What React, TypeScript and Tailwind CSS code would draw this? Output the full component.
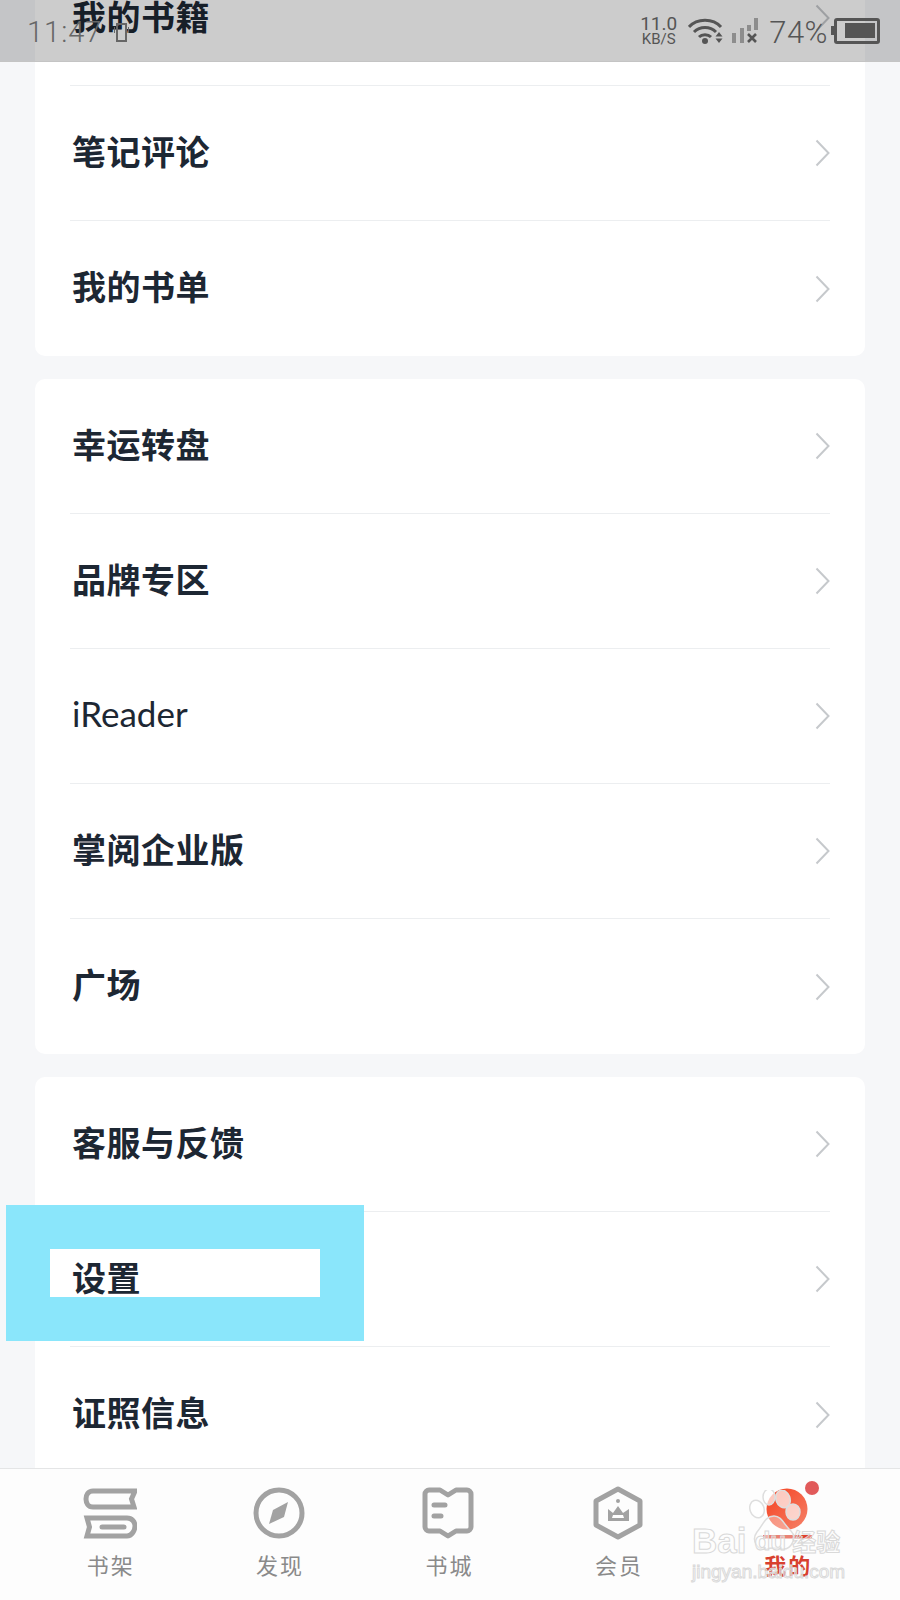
const cardOne = ["我的书籍", "笔记评论", "我的书单"];
const cardTwo = ["幸运转盘", "品牌专区", "iReader", "掌阅企业版", "广场"];
const cardThree = ["客服与反馈", "设置", "证照信息"];

function Chevron() {
  return (
    <svg width="15" height="28" viewBox="0 0 15 28" fill="none" className="shrink-0">
      <path d="M1.5 1.5l12 12.5-12 12.5" stroke="#c6c9cc" strokeWidth="2" />
    </svg>
  );
}

function Row({ label, last }: { label: string; last?: boolean }) {
  return (
    <div className={"flex h-[135px] items-center justify-between " + (last ? "" : "border-b border-[#eceef0]")}>
      <span
        className={
          label === "iReader"
            ? "pb-[6px] pl-[2px] font-['Lato',sans-serif] text-[35px] text-[#1d2733]"
            : "pb-[6px] pl-[2px] font-['Noto_Sans_CJK_SC',sans-serif] text-[34px] font-bold tracking-[0.5px] text-[#1d2733]"
        }
      >
        {label}
      </span>
      <Chevron />
    </div>
  );
}

function Card({ items, open }: { items: string[]; open?: boolean }) {
  return (
    <div className={"mx-[35px] bg-white px-[35px] " + (open ? "rounded-t-[10px]" : "rounded-[10px]")}>
      {items.map((item, i) => (
        <Row key={item} label={item} last={i === items.length - 1} />
      ))}
    </div>
  );
}

const iconGray = "#a2a2a2";

function ShelfIcon() {
  return (
    <svg width="54" height="51" viewBox="0 0 54 51" fill="none">
      <path d="M52 3H10C5 3 3 7 3 11s2 8 7 8h41l-2.5-8L52 3Z" stroke={iconGray} strokeWidth="5" />
      <path d="M4 30h40c5 0 8 4 8 8s-3 10-8 10H4l2.5-9L4 30Z" stroke={iconGray} strokeWidth="5" />
      <path d="M19 39h22" stroke={iconGray} strokeWidth="5" strokeLinecap="round" />
    </svg>
  );
}

function CompassIcon() {
  return (
    <svg width="52" height="52" viewBox="0 0 52 52" fill="none">
      <circle cx="26" cy="26" r="23" stroke={iconGray} strokeWidth="5" />
      <path d="M35 15 31 30 16 37 20 23Z" fill={iconGray} />
    </svg>
  );
}

function StoreIcon() {
  return (
    <svg width="52" height="52" viewBox="0 0 52 52" fill="none">
      <path
        d="M7 3h11l8 5 8-5h11c2 0 4 2 4 4v33c0 2-2 4-4 4H34l-8 5-8-5H7c-2 0-4-2-4-4V7c0-2 2-4 4-4Z"
        stroke={iconGray}
        strokeWidth="5"
        strokeLinejoin="round"
      />
      <path d="M12 18h11M12 29h7" stroke={iconGray} strokeWidth="5" strokeLinecap="round" />
    </svg>
  );
}

function VipIcon() {
  return (
    <svg width="50" height="54" viewBox="0 0 50 54" fill="none">
      <path d="M25 3 47 15v24L25 51 3 39V15Z" stroke={iconGray} strokeWidth="5" strokeLinejoin="round" />
      <path d="M15 35V23l5 4 5-7 5 7 6-4v12Z" fill={iconGray} />
      <path d="M19 32h12l-1-3h-10Z" fill="#fff" />
      <circle cx="25" cy="15" r="2" fill={iconGray} />
    </svg>
  );
}

function MineIcon() {
  return (
    <svg width="54" height="60" viewBox="0 0 54 60" fill="none" className="overflow-visible">
      <defs>
        <linearGradient id="ball" x1="0" y1="0" x2="1" y2="1">
          <stop offset="0" stopColor="#f5401f" />
          <stop offset="1" stopColor="#f5836a" />
        </linearGradient>
      </defs>
      <circle cx="27" cy="26" r="20.5" fill="url(#ball)" />
      <circle cx="52" cy="5" r="7" fill="#e15a5a" />
      <rect x="3" y="52" width="49" height="3.5" fill="#e0402c" />
    </svg>
  );
}

const tabs = [
  { label: "书架", icon: <ShelfIcon /> },
  { label: "发现", icon: <CompassIcon /> },
  { label: "书城", icon: <StoreIcon /> },
  { label: "会员", icon: <VipIcon /> },
  { label: "我的", icon: <MineIcon />, active: true },
];

function Signal() {
  return (
    <svg width="28" height="26" viewBox="0 0 28 26" fill="none">
      <rect x="0" y="15" width="4" height="10" fill="#8d8d8d" />
      <rect x="8" y="10" width="4" height="15" fill="#8d8d8d" />
      <rect x="15" y="7" width="4" height="6" fill="#8d8d8d" />
      <rect x="22" y="0" width="4" height="12" fill="#8d8d8d" />
      <path d="M16 16l8 8M24 16l-8 8" stroke="#555" strokeWidth="2.6" />
    </svg>
  );
}

function Wifi() {
  return (
    <svg width="36" height="26" viewBox="0 0 36 26" fill="none">
      <path d="M1 9c8-9 24-9 32 0M6 14c6-6 16-6 22 0M11 19c3-3 9-3 12 0" stroke="#555" strokeWidth="3" />
      <circle cx="17" cy="23" r="3" fill="#555" />
      <path d="M31 14l3.5 4.500h-7ZM31 25l3.500-4.500h-7Z" fill="#555" />
    </svg>
  );
}

function Vibrate() {
  return (
    <svg width="15" height="19" viewBox="0 0 15 19" fill="none">
      <rect x="3" y="1" width="9" height="17" stroke="#666" strokeWidth="2" />
      <path d="M0.500 4v6M14.500 4v6" stroke="#666" />
    </svg>
  );
}

function Paw() {
  return (
    <svg width="80" height="72" viewBox="0 0 80 72" fill="none" className="absolute left-[52px] top-[-32px]">
      <g fill="#ffffff" fillOpacity="0.7" stroke="#dedede" strokeWidth="1.500">
        <ellipse cx="13" cy="19" rx="7" ry="9" transform="rotate(-20 13 19)" />
        <ellipse cx="25" cy="7" rx="6" ry="8" />
        <ellipse cx="39" cy="9" rx="7" ry="9" transform="rotate(-20 39 9)" />
        <ellipse cx="49" cy="22" rx="7" ry="8" />
        <path d="M30 26c8 0 10 9 17 15 6 6 1 19-9 18-6-1-10-2-15 0-10 2-16-9-10-17 6-7 8-16 17-16Z" fillOpacity="0.35" />
      </g>
    </svg>
  );
}

export default function App() {
  return (
    <div className="relative flex h-[1600px] w-[900px] flex-col overflow-hidden bg-[#f6f7f9] font-['Noto_Sans_CJK_SC',sans-serif]">
      <div className="flex-1 overflow-hidden">
        <div className="mt-[-49px] flex flex-col gap-[23px]">
          <Card items={cardOne} />
          <Card items={cardTwo} />
          <Card items={cardThree} open />
        </div>
      </div>

      <div className="grid h-[132px] shrink-0 grid-cols-5 border-t border-[#e4e5e6] bg-[#fdfdfd] pl-[25px] pr-[28px]">
        {tabs.map((t) => (
          <div key={t.label} className="flex flex-col items-center">
            <div className="flex h-[78px] items-center pt-[10px]">{t.icon}</div>
            <span
              className={
                "mt-[2px] pl-[2px] text-[22px] leading-[30px] tracking-[2px] " +
                (t.active ? "font-bold text-[#d8402f]" : "text-[#8a8a8a]")
              }
            >
              {t.label}
            </span>
          </div>
        ))}
      </div>

      {/* status bar lies over the list */}
      <div className="absolute left-0 right-0 top-0 flex h-[62px] items-center justify-between border-b border-[#c4c4c4] bg-black/20 pl-[27px] pr-[20px]">
        <div className="flex items-center gap-[12px] pt-[4px]">
          <span className="font-['Roboto',sans-serif] text-[29px] font-light leading-none tracking-[1px] text-[#666]">11:47</span>
          <Vibrate />
        </div>
        <div className="flex items-center text-[#555]">
          <div className="flex flex-col items-center font-['Roboto',sans-serif] leading-none">
            <span className="text-[19px] leading-[17px]">11.0</span>
            <span className="text-[15px] leading-[15px]">KB/S</span>
          </div>
          <div className="ml-[11px]">
            <Wifi />
          </div>
          <div className="ml-[8px]">
            <Signal />
          </div>
          <span className="ml-[9px] pt-[3px] font-['Roboto',sans-serif] text-[31px] font-light leading-none tracking-[0.5px]">74%</span>
          <div className="ml-[3px] h-[9px] w-[3px] bg-[#555]" />
          <div className="flex h-[26px] w-[46px] items-center justify-end rounded-[3px] border-[3px] border-[#555] pr-[2px]">
            <div className="h-[15px] w-[30px] bg-[#555]" />
          </div>
        </div>
      </div>

      {/* highlight frame from the screenshot's editor */}
      <div className="absolute left-[6px] top-[1205px] h-[136px] w-[358px] border-[44px] border-[#84e5fb]/95" />

      {/* watermark */}
      <div className="absolute left-[692px] top-[1522px] flex w-[160px] flex-col">
        <Paw />
        <div className="relative flex items-center text-white/40 [-webkit-text-stroke:1px_#d9d9d9]">
          <span className="font-['Liberation_Sans',sans-serif] text-[35px] font-bold leading-[38px]">Bai</span>
          <span className="ml-[8px] font-['Liberation_Sans',sans-serif] text-[26px] font-bold leading-[38px]">du</span>
          <span className="ml-[6px] font-['Noto_Sans_CJK_SC',sans-serif] text-[24px] font-bold leading-[38px]">经验</span>
        </div>
        <span className="relative whitespace-nowrap font-['Liberation_Sans',sans-serif] text-[19px] leading-[24px] text-white/40 [-webkit-text-stroke:1px_#d9d9d9]">
          jingyan.baidu.com
        </span>
      </div>
    </div>
  );
}
